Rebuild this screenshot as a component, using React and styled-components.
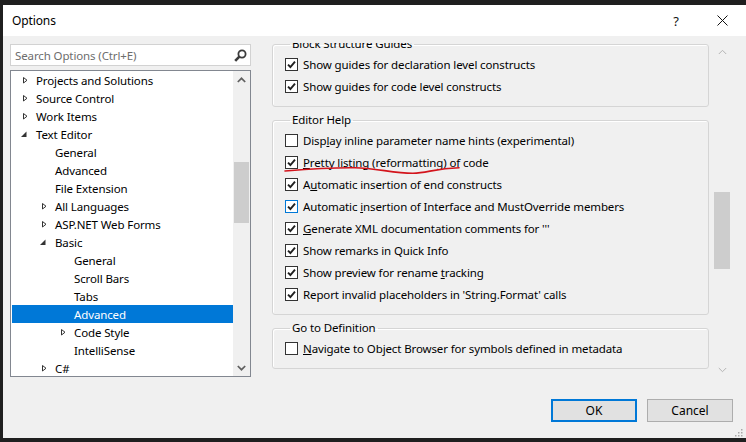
import styled, { createGlobalStyle } from "styled-components";

const GlobalStyle = createGlobalStyle`
  html, body {
    margin: 0;
    padding: 0;
    background: #1f1f1f;
  }
  * {
    box-sizing: border-box;
  }
`;

const FONT = `"Segoe UI", "Noto Sans", "Open Sans", sans-serif`;

const tree = [
  { label: "Projects and Solutions", level: 0, arrow: "closed" },
  { label: "Source Control", level: 0, arrow: "closed" },
  { label: "Work Items", level: 0, arrow: "closed" },
  { label: "Text Editor", level: 0, arrow: "open" },
  { label: "General", level: 1 },
  { label: "Advanced", level: 1 },
  { label: "File Extension", level: 1 },
  { label: "All Languages", level: 1, arrow: "closed" },
  { label: "ASP.NET Web Forms", level: 1, arrow: "closed" },
  { label: "Basic", level: 1, arrow: "open" },
  { label: "General", level: 2 },
  { label: "Scroll Bars", level: 2 },
  { label: "Tabs", level: 2 },
  { label: "Advanced", level: 2, selected: true },
  { label: "Code Style", level: 2, arrow: "closed" },
  { label: "IntelliSense", level: 2 },
  { label: "C#", level: 1, arrow: "closed" },
];

const groups = [
  {
    title: "Block Structure Guides",
    items: [
      { text: "Show guides for declaration level constructs", checked: true },
      { text: "Show guides for code level constructs", checked: true },
    ],
  },
  {
    title: "Editor Help",
    items: [
      { text: "Display inline parameter name hints (experimental)", key: 4 },
      { text: "Pretty listing (reformatting) of code", key: 0, checked: true, marked: true },
      { text: "Automatic insertion of end constructs", key: 1, checked: true },
      {
        text: "Automatic insertion of Interface and MustOverride members",
        key: 10,
        checked: true,
        focused: true,
      },
      { text: "Generate XML documentation comments for '''", key: 0, checked: true },
      { text: "Show remarks in Quick Info", checked: true },
      { text: "Show preview for rename tracking", key: 24, checked: true },
      { text: "Report invalid placeholders in 'String.Format' calls", checked: true },
    ],
  },
  {
    title: "Go to Definition",
    items: [
      { text: "Navigate to Object Browser for symbols defined in metadata", key: 0 },
    ],
  },
];

const Mnemonic = ({ text, at }) => {
  if (at === undefined) return text;
  return (
    <>
      {text.slice(0, at)}
      <u>{text[at]}</u>
      {text.slice(at + 1)}
    </>
  );
};

const TreeArrow = ({ type }) => (
  <svg width="10" height="10" viewBox="0 0 10 10">
    {type === "closed" ? (
      <path d="M2.5 2.5 L6 5.25 L2.5 8 Z" fill="none" stroke="#333" strokeWidth="1" />
    ) : (
      <path d="M5.5 2.5 L5.5 8 L0 8 Z" fill="#333" />
    )}
  </svg>
);

const Chevron = ({ up, color, weight }) => (
  <svg width="9" height="6" viewBox="0 0 9 6">
    <path
      d={up ? "M0.8 5 L4.5 1.3 L8.2 5" : "M0.8 1 L4.5 4.7 L8.2 1"}
      fill="none"
      stroke={color}
      strokeWidth={weight}
    />
  </svg>
);

const CheckBox = ({ checked, focused }) => (
  <Box $focused={focused}>
    {checked && (
      <svg width="11" height="11" viewBox="0 0 11 11">
        <path d="M2 5.6 L4.4 8 L9 2.6" fill="none" stroke="#1f1f1f" strokeWidth="1.9" />
      </svg>
    )}
  </Box>
);

const App = () => {
  return (
    <Window>
      <GlobalStyle />
      <TitleBar>
        <Title>Options</Title>
        <TitleButtons>
          <TitleButton>?</TitleButton>
          <TitleButton>
            <svg width="11" height="11" viewBox="0 0 11 11">
              <path d="M0.5 0.5 L10.5 10.5 M10.5 0.5 L0.5 10.5" stroke="#111" strokeWidth="1" />
            </svg>
          </TitleButton>
        </TitleButtons>
      </TitleBar>

      <Body>
        <Main>
          <LeftColumn>
            <SearchBox>
              <Placeholder>Search Options (Ctrl+E)</Placeholder>
              <svg width="13" height="13" viewBox="0 0 13 13">
                <circle cx="8" cy="5" r="3.6" fill="none" stroke="#3c3c3c" strokeWidth="1.8" />
                <path d="M5.6 7.4 L1.2 11.8" stroke="#3c3c3c" strokeWidth="2.6" />
              </svg>
            </SearchBox>
            <Tree>
              <TreeList>
                {tree.map((node, i) => (
                  <TreeRow key={i} $level={node.level} $selected={node.selected}>
                    <ArrowSlot>{node.arrow && <TreeArrow type={node.arrow} />}</ArrowSlot>
                    {node.label}
                  </TreeRow>
                ))}
              </TreeList>
              <ScrollBar $width={17} $top={0}>
                <ArrowButton>
                  <Chevron up color="#606060" weight={1.7} />
                </ArrowButton>
                <Track>
                  <Thumb $offset={74} $size={61} />
                </Track>
                <ArrowButton>
                  <Chevron color="#606060" weight={1.7} />
                </ArrowButton>
              </ScrollBar>
            </Tree>
          </LeftColumn>

          <RightPanel>
            <Viewport>
              <ScrollContent>
                {groups.map((group) => (
                  <Group key={group.title}>
                    <Legend>{group.title}</Legend>
                    {group.items.map((item) => (
                      <CheckRow key={item.text}>
                        <CheckBox checked={item.checked} focused={item.focused} />
                        <span>
                          <Mnemonic text={item.text} at={item.key} />
                        </span>
                        {item.marked && (
                          <Scribble width="180" height="26" viewBox="0 0 180 26">
                            <path
                              d="M0 20 C25 18 50 16.5 70 16.8 C90 17 110 22.5 128 22.3 C142 22 150 17.5 174 16.7"
                              fill="none"
                              stroke="#d3141c"
                              strokeWidth="1.6"
                              strokeLinecap="round"
                            />
                          </Scribble>
                        )}
                      </CheckRow>
                    ))}
                  </Group>
                ))}
              </ScrollContent>
            </Viewport>
            <ScrollBar $width={18} $top={0}>
              <ArrowButton>
                <Chevron up color="#b4b4b4" weight={1} />
              </ArrowButton>
              <Track>
                <Thumb $offset={132} $size={77} />
              </Track>
              <ArrowButton>
                <Chevron color="#b4b4b4" weight={1} />
              </ArrowButton>
            </ScrollBar>
          </RightPanel>
        </Main>

        <Footer>
          <Button $default>OK</Button>
          <Button>Cancel</Button>
        </Footer>

        <Grip>
          <svg width="9" height="9" viewBox="0 0 9 9">
            {[
              [7, 1],
              [7, 4],
              [4, 4],
              [7, 7],
              [4, 7],
              [1, 7],
            ].map(([x, y]) => (
              <rect key={`${x}-${y}`} x={x} y={y} width="1.5" height="1.5" fill="#a8a8a8" />
            ))}
          </svg>
        </Grip>
      </Body>
    </Window>
  );
};

export default App;

const Window = styled.div`
  display: flex;
  flex-direction: column;

  width: 746px;
  height: 442px;
  padding: 5px 0 4px 3px;

  background-color: #1f1f1f;
  font-family: ${FONT};
  font-size: 11.5px;
  letter-spacing: -0.12px;
  color: #000;
`;

const TitleBar = styled.div`
  display: flex;
  align-items: center;
  justify-content: space-between;

  height: 31px;
  padding-left: 9px;

  background-color: #fff;
`;

const Title = styled.span`
  font-size: 12px;
`;

const TitleButtons = styled.div`
  display: flex;
  height: 100%;
  margin-right: 1px;
`;

const TitleButton = styled.div`
  display: flex;
  justify-content: center;
  align-items: center;

  width: 46px;
  height: 100%;

  font-size: 13px;
  color: #111;
`;

const Body = styled.div`
  position: relative;
  display: flex;
  flex-direction: column;
  flex: 1;

  padding: 0 13px 0 7px;

  background-color: #f0f0f0;
`;

const Main = styled.div`
  display: flex;
  gap: 21px;
`;

const LeftColumn = styled.div`
  display: flex;
  flex-direction: column;
  gap: 4px;

  width: 241px;
  padding-top: 8px;
`;

const SearchBox = styled.div`
  display: flex;
  align-items: center;
  justify-content: space-between;

  height: 22px;
  padding: 0 3px 0 4px;

  border: 1px solid #d2d2d2;
  background-color: #fff;
`;

const Placeholder = styled.span`
  color: #6d6d6d;
`;

const Tree = styled.div`
  display: flex;

  height: 307px;

  border: 1px solid #828790;
  background-color: #fff;
`;

const TreeList = styled.div`
  flex: 1;
  overflow: hidden;

  padding: 0 0 0 1px;
`;

const TreeRow = styled.div`
  display: flex;
  align-items: center;

  height: 18px;
  padding-left: ${({ $level }) => $level * 19}px;

  white-space: nowrap;
  background-color: ${({ $selected }) => ($selected ? "#0078d7" : "transparent")};
  color: ${({ $selected }) => ($selected ? "#fff" : "#000")};
`;

const ArrowSlot = styled.span`
  display: flex;
  align-items: center;

  width: 24px;
  height: 10px;
  padding-left: 9px;
  flex-shrink: 0;
`;

const ScrollBar = styled.div`
  display: flex;
  flex-direction: column;

  width: ${({ $width }) => $width}px;
  padding-top: ${({ $top }) => $top}px;
  flex-shrink: 0;

  background-color: #f0f0f0;
`;

const ArrowButton = styled.div`
  display: flex;
  justify-content: center;
  align-items: center;

  height: 17px;
  flex-shrink: 0;
`;

const Track = styled.div`
  flex: 1;
  display: flex;
  flex-direction: column;
`;

const Thumb = styled.div`
  height: ${({ $size }) => $size}px;
  margin: ${({ $offset }) => $offset}px 1px 0;

  background-color: #cdcdcd;
`;

const RightPanel = styled.div`
  display: flex;
  gap: 4px;

  width: 459px;
  height: 335px;
  margin-top: 7px;
`;

const Viewport = styled.div`
  flex: 1;
  overflow: hidden;
`;

const ScrollContent = styled.div`
  display: flex;
  flex-direction: column;
  gap: 5px;

  margin-top: -7px;
`;

const Group = styled.fieldset`
  min-width: 0;
  margin: 0;
  padding: 1px 0 9px 12px;

  border: 1px solid #d5d5d5;
  border-radius: 3px;
  box-shadow: inset 1px 1px 0 #fff;
`;

const Legend = styled.legend`
  margin-left: 5px;
  padding: 0 2px;

  line-height: 16px;
`;

const CheckRow = styled.div`
  position: relative;
  display: flex;
  align-items: center;
  gap: 5px;

  height: 22px;

  white-space: nowrap;
`;

const Box = styled.span`
  display: flex;
  justify-content: center;
  align-items: center;

  width: 13px;
  height: 13px;
  flex-shrink: 0;

  border: 1px solid ${({ $focused }) => ($focused ? "#0078d7" : "#333")};
  background-color: #fff;
`;

const Scribble = styled.svg`
  position: absolute;
  left: 0;
  top: 0;
  overflow: visible;
  pointer-events: none;
`;

const Footer = styled.div`
  display: flex;
  justify-content: flex-end;
  gap: 10px;

  margin-top: 21px;
`;

const Button = styled.button`
  width: 86px;
  height: 23px;
  padding: 0;

  border: ${({ $default }) => ($default ? "2px solid #0078d7" : "1px solid #adadad")};
  background-color: #e1e1e1;

  font-family: ${FONT};
  font-size: 12px;
  color: #000;
`;

const Grip = styled.div`
  position: absolute;
  right: 3px;
  bottom: 1px;
  display: flex;
`;
